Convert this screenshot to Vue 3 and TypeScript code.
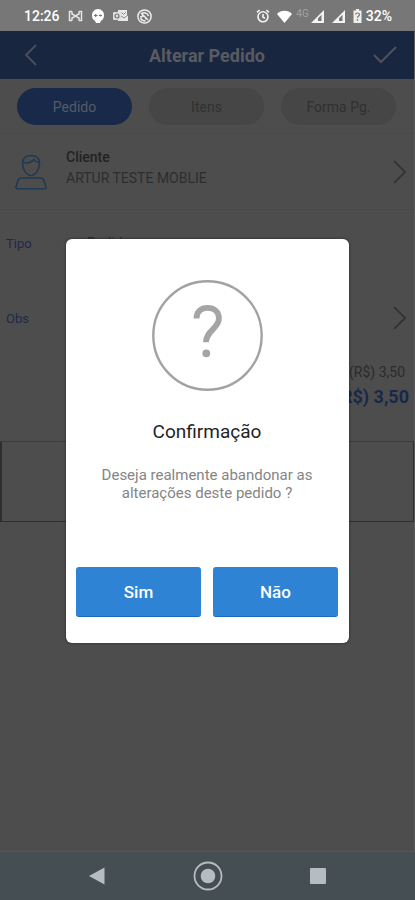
<script setup lang="ts">
import { ref } from 'vue'

const tabs: string[] = ['Pedido', 'Itens', 'Forma Pg.']
const activeTab = ref<string>('Pedido')
const open = ref<boolean>(true)
const client = { label: 'Cliente', name: 'ARTUR TESTE MOBLIE' }
</script>

<template>
  <div class="screen">
    <div class="status">
      <span class="clock">12:26</span>
      <svg width="15" height="14" viewBox="0 0 15 14" fill="none" stroke="#e6e6e6" stroke-width="1.5">
        <path d="M4 2.500H1.500v9H4M11 2.500h2.500v9H11M4 2.500v2.500l3.500 2L11 5V2.500M4 11.500V9l3.500-2L11 9v2.500" />
      </svg>
      <svg width="14" height="14" viewBox="0 0 14 14">
        <path d="M7 0a6 6 0 0 1 6 6.500c0 3-1.500 4.300-3 5.200L9 14H5l-1-2.300C2.500 10.800 1 9.500 1 6.500A6 6 0 0 1 7 0z" fill="#fff" />
        <path d="M3 6.500h3.500M7.800 6.500h3.200M4.700 5v3M9.400 5.500v2" stroke="#777" stroke-width="1.200" />
      </svg>
      <svg width="16" height="14" viewBox="0 0 16 14">
        <path d="M5 1h9v5h1v6H5z" fill="#e8e8e8" />
        <rect x="0" y="3" width="8" height="8" rx="1" fill="#ddd" />
        <circle cx="4" cy="7" r="2" fill="none" stroke="#777" stroke-width="1.200" />
        <path d="M8 7l3 2 4-3M8.500 3.500l2 2 2.500-2.500" fill="none" stroke="#888" />
      </svg>
      <svg width="15" height="15" viewBox="0 0 15 15" fill="none" stroke="#eee" stroke-width="1.500">
        <circle cx="7.500" cy="7.500" r="6.600" />
        <path d="M4 5c2.500-2 6.500-1.500 7.500 2M4.500 7.500c2-1 4 0 4.500 2.500M4 4l7 7M4 7v3c1 1.500 3 2 4.500 1.500" />
      </svg>
      <span class="spacer"></span>
      <svg width="14" height="14" viewBox="0 0 14 14" fill="none" stroke="#f4f4f4" stroke-width="1.600">
        <circle cx="7" cy="7.800" r="5" />
        <path d="M7 5v3l2 1.300M1 3.300L3.600 1M13 3.300L10.400 1" />
      </svg>
      <svg class="wifi" width="15" height="13" viewBox="0 0 15 13"><path d="M7.500 13L0 4C4-.3 11-.3 15 4z" fill="#fff" /></svg>
      <span class="net">4G</span>
      <svg width="13" height="13" viewBox="0 0 13 13"><path d="M0 13L13 0v13zM7 8.200v2.800h3.500V4.700z" fill="#f4f4f4" fill-rule="evenodd" /></svg>
      <svg width="13" height="13" viewBox="0 0 13 13"><path d="M0 13L13 0v13zM7 8.200v2.800h3.500V4.700z" fill="#f4f4f4" fill-rule="evenodd" /></svg>
      <svg width="9" height="14" viewBox="0 0 9 14">
        <path d="M3 0h3v1.500h2.500V14h-8V1.500H3z" fill="#eee" />
        <path d="M2.500 5.500c0-2 4-2 4 0 0 1.500-2 1.500-2 3.200M4.500 10v1.800" fill="none" stroke="#777" stroke-width="1.200" />
      </svg>
      <span class="battery">32%</span>
    </div>

    <div class="stage">
      <main class="page">
        <header class="bar">
          <button class="icon-btn" aria-label="Voltar">
            <svg width="14" height="24" viewBox="0 0 14 24"><path d="M12 2L2 12l10 10" fill="none" stroke="#4a4f59" stroke-width="1.800" /></svg>
          </button>
          <h1>Alterar Pedido</h1>
          <button class="icon-btn save" aria-label="Salvar">
            <svg width="24" height="18" viewBox="0 0 24 18"><path d="M1 9l7 7L23 1" fill="none" stroke="#4d525b" stroke-width="2" /></svg>
          </button>
        </header>

        <nav class="tabs">
          <button v-for="t in tabs" :key="t" class="tab" :class="{ active: t === activeTab }" @click="activeTab = t">{{ t }}</button>
        </nav>

        <section class="client">
          <svg width="34" height="36" viewBox="0 0 34 36" fill="none" stroke="#233851" stroke-width="1.600">
            <path d="M8.500 9.500C8.500 4 12 1.500 17 1.500S25.500 4 25.500 9.500C25.500 14.500 22 21.500 17 21.500S8.500 14.500 8.500 9.500z" />
            <path d="M9 8c3 1.500 7 1.500 11-2.500 1 2 3 2.800 5 3" />
            <path d="M7 24h20c2 0 2.500 1 3 2.500l2 6.500c.3 1.200-.2 1.700-1.200 1.700H3.200c-1 0-1.500-.5-1.200-1.700l2-6.500C4.500 25 5 24 7 24z" />
          </svg>
          <div class="client-text">
            <strong>{{ client.label }}</strong>
            <span>{{ client.name }}</span>
          </div>
          <svg width="14" height="26" viewBox="0 0 14 26"><path d="M1 2l11 11L1 24" fill="none" stroke="#303030" stroke-width="1.700" /></svg>
        </section>

        <section class="field type">
          <span class="name">Tipo</span>
          <span class="value">Pedido</span>
        </section>
        <section class="field note">
          <span class="name">Obs</span>
          <span class="value"></span>
          <svg width="14" height="26" viewBox="0 0 14 26"><path d="M1 2l11 11L1 24" fill="none" stroke="#303030" stroke-width="1.700" /></svg>
        </section>

        <section class="totals">
          <span class="sub">(R$) 3,50</span>
          <span class="total">(R$) 3,50</span>
        </section>
        <div class="box"></div>
      </main>

      <div v-if="open" class="overlay">
        <div class="dialog" role="dialog" aria-labelledby="dialog-title">
          <svg width="111" height="111" viewBox="0 0 111 111">
            <circle cx="55.500" cy="55.500" r="54.200" fill="none" stroke="#a2a2a2" stroke-width="2.400" />
            <path d="M44.500 38.500C44.500 31.500 49 27.900 55.500 27.900S66.900 31.500 66.900 38.500C66.900 48.500 54 50.500 54 62.300" fill="none" stroke="#a5a5a5" stroke-width="5.800" />
            <circle cx="54.300" cy="73.300" r="3.900" fill="#a5a5a5" />
          </svg>
          <h2 id="dialog-title">Confirmação</h2>
          <p>Deseja realmente abandonar as alterações deste pedido ?</p>
          <div class="actions">
            <button @click="open = false">Sim</button>
            <button @click="open = false">Não</button>
          </div>
        </div>
      </div>
    </div>

    <nav class="system">
      <button aria-label="Voltar"><svg width="16" height="18" viewBox="0 0 16 18"><path d="M0 9L15.500 .5v17z" fill="#b5bdc1" /></svg></button>
      <button aria-label="Início">
        <svg width="30" height="30" viewBox="0 0 30 30"><circle cx="15" cy="15" r="13.500" fill="none" stroke="#b5bdc1" stroke-width="1.800" /><circle cx="15" cy="15" r="7.300" fill="#b5bdc1" /></svg>
      </button>
      <button aria-label="Recentes"><svg width="16" height="16" viewBox="0 0 16 16"><rect width="16" height="16" rx="1" fill="#b5bdc1" /></svg></button>
    </nav>
  </div>
</template>

<style>
body {
  background: #4d4d4d;
}
</style>

<style scoped>
.screen {
  display: flex;
  flex-direction: column;
  min-height: 100vh;
  font-family: Roboto, "Liberation Sans", sans-serif;
  background: #4d4d4d;
}
button {
  font-family: inherit;
  border: 0;
  padding: 0;
  background: none;
  cursor: pointer;
}
svg {
  display: block;
  flex: none;
}
.status {
  display: flex;
  align-items: center;
  gap: 8px;
  height: 31px;
  box-sizing: border-box;
  padding: 1px 23px 0 24px;
  background: #777;
  color: #fff;
}
.clock,
.battery {
  font-size: 14px;
  font-weight: 500;
}
.battery {
  margin-left: -4px;
}
.spacer {
  flex: 1;
}
.wifi {
  margin: 0 -4px 0 -1px;
}
.net {
  align-self: flex-start;
  margin: 7px -6px 0 0;
  font-size: 10px;
  line-height: 12px;
  color: #a2a2a2;
}
.stage {
  position: relative;
  flex: 1;
  display: flex;
}
.page {
  flex: 1;
  border-right: 1px solid #5a5a5a;
}
.bar {
  display: grid;
  grid-template-columns: 1fr auto 1fr;
  align-items: center;
  height: 48px;
  padding: 0 17px 0 24px;
  background: #18263f;
}
.bar h1 {
  margin: 0 7px 0 0;
  font-size: 18px;
  font-weight: 700;
  color: #585b62;
}
.icon-btn {
  justify-self: start;
}
.save {
  justify-self: end;
}
.tabs {
  display: grid;
  grid-template-columns: repeat(3, 1fr);
  gap: 17px;
  padding: 9px 18px 8px 17px;
}
.tab {
  height: 37px;
  border-radius: 19px;
  background: #464646;
  color: #303030;
  font-size: 14px;
}
.tab.active {
  background: #18294a;
  color: #565b64;
}
.client {
  display: flex;
  align-items: center;
  height: 77px;
  padding: 0 7px 0 14px;
  border-top: 1px solid #4a4a4a;
  border-bottom: 1px solid #484848;
  box-sizing: border-box;
}
.client-text {
  flex: 1;
  display: flex;
  flex-direction: column;
  margin-left: 18px;
  padding-bottom: 8px;
  font-size: 14px;
  line-height: 21px;
  color: #2d2d2d;
}
.client-text strong {
  font-weight: 500;
  color: #222;
}
.field {
  display: flex;
  align-items: center;
  padding: 0 7px 0 6px;
  font-size: 14px;
}
.type {
  height: 66px;
}
.note {
  height: 84px;
  padding-bottom: 1px;
}
.name {
  width: 81px;
  font-size: 13px;
  color: #212948;
}
.value {
  flex: 1;
  color: #2c2c2c;
}
.totals {
  display: flex;
  flex-direction: column;
  align-items: flex-end;
  padding: 0 5px 30px 0;
}
.sub {
  padding-right: 4px;
  font-size: 14px;
  line-height: 22px;
  color: #2b2b2b;
}
.total {
  font-size: 18px;
  font-weight: 700;
  line-height: 28px;
  color: #182849;
}
.box {
  height: 79px;
  border: 1px solid #2e2e2e;
  border-top-color: #3c3c3c;
  border-left-width: 2px;
}
.overlay {
  position: absolute;
  inset: 0;
  display: flex;
  align-items: center;
  padding: 0 66px;
}
.dialog {
  flex: 1;
  display: flex;
  flex-direction: column;
  align-items: center;
  padding: 41px 11px 26px 10px;
  border-radius: 6px;
  background: #fff;
  box-shadow: 0 0 3px rgba(0, 0, 0, 0.5);
}
.dialog h2 {
  margin: 29px 0 22px;
  font-size: 19px;
  line-height: 24px;
  font-weight: 400;
  color: #1f1f1f;
}
.dialog p {
  margin: 0;
  max-width: 230px;
  font-size: 15px;
  line-height: 18px;
  color: #858585;
  text-align: center;
}
.actions {
  display: grid;
  grid-template-columns: 1fr 1fr;
  gap: 12px;
  align-self: stretch;
  margin-top: 65px;
}
.actions button {
  height: 50px;
  border-radius: 3px;
  background: #2e83d5;
  border-bottom: 1px solid #176bc0;
  color: #fff;
  font-size: 17px;
  font-weight: 500;
}
.system {
  display: flex;
  align-items: center;
  justify-content: space-between;
  height: 49px;
  box-sizing: border-box;
  padding: 0 89px;
  border-top: 1px solid #54585a;
  background: #454e52;
}
</style>
